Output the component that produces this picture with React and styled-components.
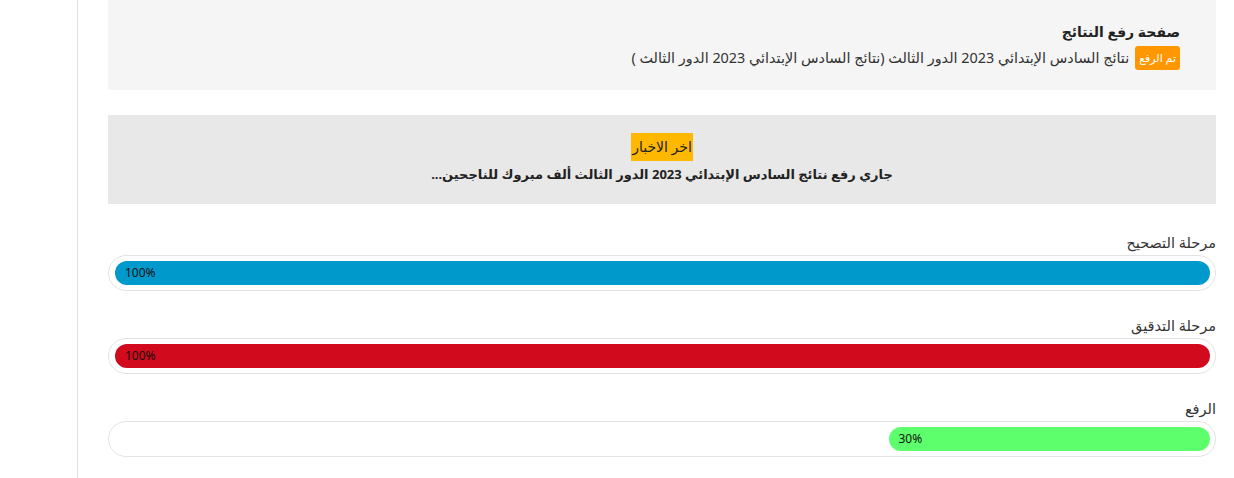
import React from 'react';
import styled, { createGlobalStyle } from 'styled-components';

const GlobalStyle = createGlobalStyle`
  html, body {
    margin: 0;
    padding: 0;
    background: #fff;
  }

  body {
    font-family: 'Noto Sans', 'DejaVu Sans', sans-serif;
    color: #333;
  }
`;

const Page = styled.div`
  display: flex;
  direction: ltr;
  height: 478px;
  overflow: hidden;
`;

const Sidebar = styled.aside`
  border-right: 1px solid #e3e3e3;
  flex: 0 0 77px;
`;

const Main = styled.main`
  direction: rtl;
  display: flex;
  flex-direction: column;
  padding: 0 18px 0 30px;
  width: 1108px;
`;

const Header = styled.section`
  background-color: #f5f5f5;
  box-sizing: border-box;
  display: flex;
  flex-direction: column;
  gap: 3px;
  height: 90px;
  padding: 21px 36px 0;
`;

const Title = styled.h1`
  color: #222;
  font-size: 14px;
  font-weight: 700;
  line-height: 22px;
  margin: 0;
`;

const Status = styled.div`
  align-items: center;
  display: flex;
  font-size: 14.4px;
  gap: 6px;
  line-height: 24px;
`;

const Badge = styled.span`
  background-color: #ff9800;
  border-radius: 3px;
  color: #fff;
  font-size: 11px;
  line-height: 24px;
  padding: 0 4px;
`;

const News = styled.section`
  align-items: center;
  background-color: #e8e8e8;
  box-sizing: border-box;
  display: flex;
  flex-direction: column;
  height: 89px;
  justify-content: center;
  margin-top: 25px;
`;

const NewsTag = styled.span`
  background-color: #ffb800;
  color: #222;
  font-size: 14px;
  font-weight: 500;
  line-height: 28px;
  padding: 0 1px;
`;

const NewsText = styled.p`
  color: #222;
  font-size: 13px;
  font-weight: 700;
  line-height: 26px;
  margin: 0;
`;

const Stages = styled.div`
  display: flex;
  flex-direction: column;
  gap: 24px;
  margin-top: 28px;
`;

const Stage = styled.div`
  display: flex;
  flex-direction: column;
  gap: 3px;
`;

const Label = styled.span`
  color: #333;
  font-size: 14.5px;
  line-height: 20px;
`;

const Track = styled.div`
  border: 1px solid #e3e3e3;
  border-radius: 18px;
  box-sizing: border-box;
  display: flex;
  height: 36px;
  padding: 5px 5px 5px 6px;
`;

const Fill = styled.div`
  background-color: ${(props) => props.color};
  border-radius: 12px;
  box-sizing: border-box;
  color: #111;
  font-size: 12px;
  height: 24px;
  line-height: 24px;
  padding-left: 10px;
  text-align: left;
`;

const stages = [
  { label: 'مرحلة التصحيح', value: 100, color: '#0099cc' },
  { label: 'مرحلة التدقيق', value: 100, color: '#d20a1e' },
  { label: 'الرفع', value: 30, color: '#5eff6c' },
];

const App = () => (
  <>
    <GlobalStyle />
    <Page>
      <Sidebar />
      <Main>
        <Header>
          <Title>صفحة رفع النتائج</Title>
          <Status>
            <Badge>تم الرفع</Badge>
            <span>نتائج السادس الإبتدائي 2023 الدور الثالث (نتائج السادس الإبتدائي 2023 الدور الثالث )</span>
          </Status>
        </Header>
        <News>
          <NewsTag>اخر الاخبار</NewsTag>
          <NewsText>جاري رفع نتائج السادس الإبتدائي 2023 الدور الثالث ألف مبروك للناجحين...</NewsText>
        </News>
        <Stages>
          {stages.map((stage) => (
            <Stage key={stage.label}>
              <Label>{stage.label}</Label>
              <Track>
                <Fill
                  color={stage.color}
                  style={{ width: stage.value === 100 ? '100%' : `calc(${stage.value}% - 7px)` }}
                >
                  <span dir="ltr">{stage.value}%</span>
                </Fill>
              </Track>
            </Stage>
          ))}
        </Stages>
      </Main>
    </Page>
  </>
);

export default App;
